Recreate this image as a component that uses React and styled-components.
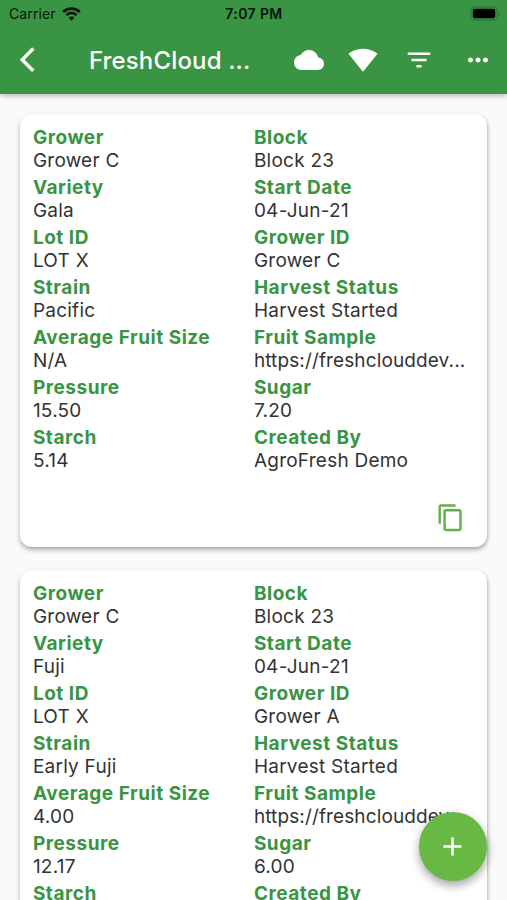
import styled, { createGlobalStyle } from "styled-components";

const GlobalStyle = createGlobalStyle`
  * {
    box-sizing: border-box;
  }

  body {
    background-color: #fafafa;
    font-family: Inter, "Liberation Sans", sans-serif;
    margin: 0;
    overflow: hidden;
  }
`;

const Container = styled.div`
  height: 900px;
  overflow: hidden;
  position: relative;
  width: 507px;
`;

const Header = styled.header`
  background-color: #399444;
  box-shadow: 0 2px 5px rgba(0, 0, 0, 0.25);
  height: 94px;
`;

const StatusBar = styled.div`
  align-items: center;
  color: #0b1a0d;
  display: grid;
  font-size: 14px;
  grid-template-columns: 1fr auto 1fr;
  height: 27px;
  padding: 0 6px 0 9px;
`;

const Carrier = styled.div`
  align-items: center;
  display: flex;
  gap: 6px;
  letter-spacing: 0.1px;
`;

const Clock = styled.div`
  color: #06130a;
  font-weight: 600;
  letter-spacing: 0.4px;
  margin-right: 2px;
`;

const Battery = styled.svg`
  justify-self: end;
`;

const AppBar = styled.div`
  align-items: center;
  color: white;
  display: flex;
  height: 66px;
  padding: 0 14.5px 0 20px;
`;

const Title = styled.h1`
  font-size: 24px;
  font-weight: 500;
  letter-spacing: 0.15px;
  line-height: 30px;
  margin: 1px 0 0 39.5px;
  white-space: pre;
  width: 190px;
`;

const Actions = styled.div`
  align-items: center;
  display: flex;
  margin-left: auto;
`;

const Icon = styled.svg`
  display: block;
  fill: currentColor;
  flex: none;
  height: ${(props) => props.$size || 30}px;
  margin-left: ${(props) => props.$gap || 0}px;
  width: ${(props) => props.$size || 30}px;
`;

const List = styled.main`
  display: flex;
  flex-direction: column;
  gap: 22.7px;
  padding: 20px 20px 0 20px;
`;

const Card = styled.article`
  background-color: white;
  border-radius: 12px;
  box-shadow: 0 3px 5px rgba(0, 0, 0, 0.28), 1px 1px 3px rgba(0, 0, 0, 0.1);
  display: flex;
  flex: none;
  flex-direction: column;
  height: 433px;
  justify-content: space-between;
  padding: 11.9px 12.9px 12px;
`;

const Fields = styled.div`
  display: grid;
  grid-template-columns: 221px 220px;
`;

const Field = styled.div`
  height: 50.05px;
`;

const Label = styled.div`
  color: #399444;
  font-size: 19px;
  font-weight: 700;
  letter-spacing: 0.52px;
  line-height: 23.3px;
  white-space: nowrap;
`;

const Value = styled.div`
  color: #333;
  font-size: 19px;
  letter-spacing: ${(props) => (props.$tight ? "0.12px" : "0.24px")};
  line-height: 23.3px;
  white-space: nowrap;
`;

const CopyButton = styled.button`
  align-self: flex-end;
  background: none;
  border: none;
  color: #62b146;
  cursor: pointer;
  margin: 0 8.7px 3px 0;
  padding: 0;
`;

const AddButton = styled.button`
  align-items: center;
  background-color: #68b845;
  border: none;
  border-radius: 50%;
  bottom: 19.5px;
  box-shadow: 0 5px 8px rgba(0, 0, 0, 0.26), 0 2px 12px rgba(0, 0, 0, 0.12);
  color: white;
  cursor: pointer;
  display: flex;
  height: 68.5px;
  justify-content: center;
  padding: 0;
  position: absolute;
  right: 19.8px;
  width: 68.5px;
`;

const harvests = [
  [
    ["Grower", "Grower C"],
    ["Block", "Block 23"],
    ["Variety", "Gala"],
    ["Start Date", "04-Jun-21"],
    ["Lot ID", "LOT X"],
    ["Grower ID", "Grower C"],
    ["Strain", "Pacific"],
    ["Harvest Status", "Harvest Started"],
    ["Average Fruit Size", "N/A"],
    ["Fruit Sample", "https://freshclouddev..."],
    ["Pressure", "15.50"],
    ["Sugar", "7.20"],
    ["Starch", "5.14"],
    ["Created By", "AgroFresh Demo"],
  ],
  [
    ["Grower", "Grower C"],
    ["Block", "Block 23"],
    ["Variety", "Fuji"],
    ["Start Date", "04-Jun-21"],
    ["Lot ID", "LOT X"],
    ["Grower ID", "Grower A"],
    ["Strain", "Early Fuji"],
    ["Harvest Status", "Harvest Started"],
    ["Average Fruit Size", "4.00"],
    ["Fruit Sample", "https://freshclouddev..."],
    ["Pressure", "12.17"],
    ["Sugar", "6.00"],
    ["Starch", ""],
    ["Created By", ""],
  ],
];

const HarvestCard = ({ fields }) => (
  <Card>
    <Fields>
      {fields.map(([label, value]) => (
        <Field key={label}>
          <Label>{label}</Label>
          <Value $tight={value.length > 20}>{value}</Value>
        </Field>
      ))}
    </Fields>
    <CopyButton aria-label="Copy">
      <Icon $size={29.4} viewBox="0 0 24 24">
        <path d="M16 1H4c-1.1 0-2 .9-2 2v14h2V3h12V1zm3 4H8c-1.1 0-2 .9-2 2v14c0 1.1.9 2 2 2h11c1.1 0 2-.9 2-2V7c0-1.1-.9-2-2-2zm0 16H8V7h11v14z" />
      </Icon>
    </CopyButton>
  </Card>
);

const App = () => {
  return (
    <Container>
      <GlobalStyle />
      <Header>
        <StatusBar>
          <Carrier>
            <span>Carrier</span>
            <svg width="19" height="14" viewBox="0 0 19 14" fill="none" stroke="currentColor">
              <path d="M1.2 4.9a12 12 0 0 1 16.6 0" strokeWidth="2.8" />
              <path d="M4.3 8.1a7.5 7.5 0 0 1 10.4 0" strokeWidth="2.5" />
              <path d="M9.5 13.8 6.6 10.8a4.2 4.2 0 0 1 5.8 0z" fill="currentColor" stroke="none" />
            </svg>
          </Carrier>
          <Clock>7:07 PM</Clock>
          <Battery width="31" height="15" viewBox="0 0 31 15">
            <rect x="1" y="1" width="26" height="13" rx="4" fill="none" stroke="#2f7a38" strokeWidth="1.3" />
            <rect x="2.8" y="2.8" width="22.4" height="9.4" rx="2" fill="#000" />
            <path d="M28.6 5.2v4.6c1-.4 1.6-1.2 1.6-2.3s-.6-1.9-1.6-2.3z" fill="#2f7a38" />
          </Battery>
        </StatusBar>
        <AppBar>
          <Icon $size={29.4} viewBox="0 0 24 24">
            <path
              d="M11.67 3.87 9.9 2.1 0 12l9.9 9.9 1.77-1.77L3.54 12z"
              stroke="currentColor"
              strokeWidth="0.4"
            />
          </Icon>
          <Title>FreshCloud ...</Title>
          <Actions>
            <Icon viewBox="0 0 24 24">
              <path d="M19.35 10.04C18.67 6.59 15.64 4 12 4 9.11 4 6.6 5.64 5.35 8.04 2.34 8.36 0 10.91 0 14c0 3.31 2.69 6 6 6h13c2.76 0 5-2.24 5-5 0-2.64-2.05-4.78-4.65-4.96z" />
            </Icon>
            <Icon $gap={24} viewBox="0 0 24 24">
              <path d="M12.01 21.49 23.64 7c-.45-.34-4.93-4-11.64-4C5.28 3 .81 6.66.36 7l11.63 14.49.01.01.01-.01z" />
            </Icon>
            <Icon $gap={26} viewBox="0 0 24 24">
              <path d="M10 18h4v-2h-4v2zM3 6v2h18V6H3zm3 7h12v-2H6v2z" />
            </Icon>
            <Icon $gap={29} viewBox="0 0 24 24">
              <path d="M6 10c-1.1 0-2 .9-2 2s.9 2 2 2 2-.9 2-2-.9-2-2-2zm12 0c-1.1 0-2 .9-2 2s.9 2 2 2 2-.9 2-2-.9-2-2-2zm-6 0c-1.1 0-2 .9-2 2s.9 2 2 2 2-.9 2-2-.9-2-2-2z" />
            </Icon>
          </Actions>
        </AppBar>
      </Header>
      <List>
        {harvests.map((fields, index) => (
          <HarvestCard key={index} fields={fields} />
        ))}
      </List>
      <AddButton aria-label="Add">
        <Icon $size={31} viewBox="0 0 24 24">
          <path d="M19 13h-6v6h-2v-6H5v-2h6V5h2v6h6v2z" />
        </Icon>
      </AddButton>
    </Container>
  );
};

export default App;
